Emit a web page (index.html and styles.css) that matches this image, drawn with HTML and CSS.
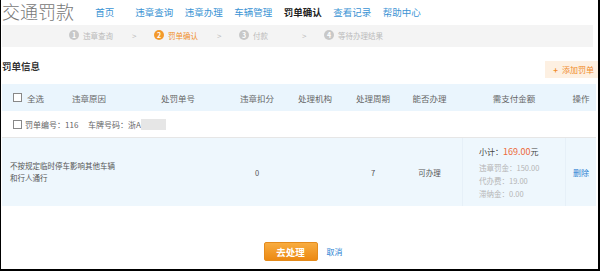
FILE: index.html
```html
<!DOCTYPE html>
<html lang="zh-CN">
    <head>
        <meta charset="UTF-8" />
        <title>交通罚款 - 罚单确认</title>
        <link rel="stylesheet" href="styles.css">
    </head>
    <body>
        <div class="page">
            <header class="top">
                <div class="logo">交通罚款</div>
                <nav class="nav">
                    <a href="#">首页</a>
                    <a href="#">违章查询</a>
                    <a href="#">违章办理</a>
                    <a href="#">车辆管理</a>
                    <a href="#" class="current">罚单确认</a>
                    <a href="#">查看记录</a>
                    <a href="#">帮助中心</a>
                </nav>
            </header>

            <div class="steps">
                <div class="step"><span class="num">1</span>违章查询</div>
                <span class="arrow">&gt;</span>
                <div class="step active"><span class="num">2</span>罚单确认</div>
                <span class="arrow">&gt;</span>
                <div class="step"><span class="num">3</span>付款</div>
                <span class="arrow">&gt;</span>
                <div class="step"><span class="num">4</span>等待办理结果</div>
            </div>

            <div class="title-row">
                <h2>罚单信息</h2>
                <a href="#" class="add-btn"><span class="plus">+</span>添加罚单</a>
            </div>

            <div class="row head">
                <div class="cell first"><span class="check"></span>全选</div>
                <div class="cell">违章原因</div>
                <div class="cell">处罚单号</div>
                <div class="cell">违章扣分</div>
                <div class="cell">处理机构</div>
                <div class="cell">处理周期</div>
                <div class="cell">能否办理</div>
                <div class="cell">需支付金额</div>
                <div class="cell">操作</div>
            </div>

            <div class="ticket">
                <span class="check"></span>
                <span class="ticket-no">罚单编号：116</span>
                <span class="plate">车牌号码：浙A</span>
                <span class="masked"></span>
            </div>

            <div class="row item">
                <div class="cell reason">不按规定临时停车影响其他车辆<br>和行人通行</div>
                <div class="cell">0</div>
                <div class="cell"></div>
                <div class="cell">7</div>
                <div class="cell">可办理</div>
                <div class="cell amount">
                    <div class="subtotal">小计：<em>169.00</em>元</div>
                    <div>违章罚金：150.00</div>
                    <div>代办费：19.00</div>
                    <div>滞纳金：0.00</div>
                </div>
                <div class="cell"><a href="#" class="link">删除</a></div>
            </div>

            <div class="actions">
                <button class="go-btn">去处理</button>
                <a href="#" class="link cancel">取消</a>
            </div>
        </div>
    </body>
</html>
```

FILE: styles.css
```css
body {
    margin: 0;
    font-family: 'Noto Sans CJK SC', 'Liberation Sans', sans-serif;
    color: #555;
    background: #fff;
}
a {
    text-decoration: none;
}
.page {
    width: 600px;
    height: 271px;
    box-sizing: border-box;
    border-left: 1px solid #000;
    border-right: 2px solid #000;
    border-bottom: 2px solid #000;
    padding-left: 1px;
    overflow: hidden;
}

/* header */
.top {
    display: flex;
    align-items: flex-start;
    height: 25px;
}
.logo {
    font-size: 18px;
    line-height: 23px;
    font-weight: 300;
    color: #777;
    width: 78px;
}
.nav {
    display: flex;
    padding-top: 3px;
}
.nav a {
    width: 49.5px;
    text-align: center;
    font-size: 9.5px;
    line-height: 19px;
    color: #3a93d4;
}
.nav a.current {
    color: #222;
    font-weight: bold;
}

/* steps */
.steps {
    display: flex;
    align-items: center;
    height: 22px;
    padding-left: 67px;
    padding-bottom: 2px;
    margin-right: 5px;
    background: #f4f4f4;
    box-sizing: border-box;
}
.step {
    display: flex;
    align-items: center;
    gap: 4px;
    width: 63px;
    font-size: 7.5px;
    color: #bbb;
}
.step .num {
    width: 10px;
    height: 10px;
    border-radius: 50%;
    background: #c8c8c8;
    color: #fff;
    font-size: 7px;
    font-weight: bold;
    line-height: 10px;
    text-align: center;
}
.step.active {
    color: #f0902a;
}
.step.active .num {
    background: #f39a2b;
}
.arrow {
    width: 22px;
    font-size: 8px;
    color: #bbb;
}

/* title */
.title-row {
    display: flex;
    justify-content: space-between;
    align-items: flex-start;
    height: 37px;
    padding-top: 12px;
    box-sizing: border-box;
}
.title-row h2 {
    margin: 0;
    font-size: 9.5px;
    line-height: 14px;
    color: #333;
}
.add-btn {
    display: flex;
    align-items: center;
    gap: 4px;
    height: 17px;
    margin-top: 2px;
    padding: 0 4px 0 8px;
    background: #fdf0e2;
    color: #f08c2b;
    font-size: 8px;
}
.add-btn .plus {
    font-weight: bold;
}

/* table */
.row {
    display: grid;
    grid-template-columns: 53px 68px 110px 48px 68px 48px 65px 104px 1fr;
    margin-right: 2px;
}
.cell {
    display: flex;
    align-items: center;
    justify-content: center;
}
.head {
    height: 27px;
    background: #eaf5fd;
    font-size: 8.5px;
    color: #666;
}
.head .first {
    justify-content: flex-start;
    padding-left: 11px;
    gap: 5px;
}
.check {
    width: 7px;
    height: 7px;
    border: 1px solid #888;
    background: #fff;
}
.ticket {
    display: flex;
    align-items: center;
    height: 26px;
    padding-left: 11px;
    margin-right: 2px;
    border-bottom: 1px solid #e6e6e6;
    font-size: 8px;
    color: #666;
}
.ticket .check {
    margin-right: 3px;
}
.ticket-no {
    width: 63px;
}
.masked {
    width: 25px;
    height: 11px;
    background: #e6e6e6;
}
.item {
    height: 68px;
    background: #eef7fd;
    font-size: 7.5px;
    color: #555;
}
.item .reason {
    grid-column: 1 / span 3;
    justify-content: flex-start;
    padding-left: 8px;
    line-height: 12px;
}
.amount {
    flex-direction: column;
    align-items: flex-start;
    justify-content: center;
    padding-left: 16px;
    line-height: 13px;
    color: #b5b5b5;
    border-left: 1px solid #e6f0f8;
    border-right: 1px solid #e6f0f8;
}
.amount .subtotal {
    margin-bottom: 3px;
    font-size: 8px;
    color: #444;
}
.amount em {
    font-style: normal;
    font-size: 9px;
    color: #ec6a3b;
}
.link {
    color: #2a83d3;
    font-size: 8px;
}

/* footer buttons */
.actions {
    display: flex;
    align-items: center;
    justify-content: center;
    gap: 9px;
    margin-top: 36px;
    padding-left: 6px;
}
.go-btn {
    width: 54px;
    height: 19px;
    border: 1px solid #e48b1c;
    border-radius: 2px;
    background: linear-gradient(#f8ac40, #ec8912);
    color: #fff;
    font-family: inherit;
    font-size: 9.5px;
    font-weight: bold;
    cursor: pointer;
}
.cancel {
    font-size: 8px;
}
```
